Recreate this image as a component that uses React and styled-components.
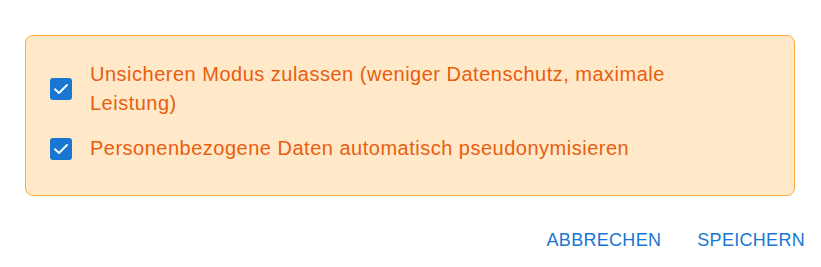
import React, { useState } from "react"
import styled, { createGlobalStyle } from "styled-components"

const GlobalStyle = createGlobalStyle`
    body {
        margin: 0;
        background: #ffffff;
        font-family: "Liberation Sans", Arial, sans-serif;
    }
`

const Page = styled.div`
    display: flex;
    flex-direction: column;
    padding: 35px 26px 0 25px;
`

const WarningBox = styled.div`
    display: flex;
    flex-direction: column;
    gap: 16px;
    height: 161px;
    box-sizing: border-box;
    padding: 24px 24px 0 24px;
    background-color: #ffe9c9;
    border: 1px solid #ffab40;
    border-radius: 8px;
`

const OptionRow = styled.label`
    display: flex;
    align-items: center;
    gap: 18px;
    cursor: pointer;
`

const CheckBox = styled.span`
    flex: 0 0 auto;
    display: flex;
    align-items: center;
    justify-content: center;
    width: 22px;
    height: 22px;
    border-radius: 3px;
    background-color: ${({ checked }) => (checked ? "#1976d2" : "transparent")};
    border: ${({ checked }) => (checked ? "none" : "2px solid #757575")};
    box-sizing: border-box;
`

const OptionText = styled.span`
    max-width: 620px;
    font-size: 20px;
    line-height: 29px;
    color: #ea5d0f;
    letter-spacing: 0.5px;
`

const Actions = styled.div`
    display: flex;
    justify-content: flex-end;
    gap: 36px;
    margin-top: 32px;
    margin-right: -10px;
`

const TextButton = styled.button`
    all: unset;
    cursor: pointer;
    font-family: "Liberation Sans", Arial, sans-serif;
    font-size: 18px;
    line-height: 24px;
    letter-spacing: 0.3px;
    text-transform: uppercase;
    color: #1976d2;
`

const Option = ({ label, checked, onToggle }) => (
    <OptionRow onClick={onToggle}>
        <CheckBox checked={checked}>
            {checked && (
                <svg width="22" height="22" viewBox="0 0 22 22">
                    <path d="M5 11.3 L9 15 L17 7" fill="none" stroke="#fff" strokeWidth="1.9" strokeLinecap="round" strokeLinejoin="round" />
                </svg>
            )}
        </CheckBox>
        <OptionText>{label}</OptionText>
    </OptionRow>
)

const App = () => {
    const [unsafeMode, setUnsafeMode] = useState(true)
    const [pseudonymize, setPseudonymize] = useState(true)

    return (
        <Page>
            <GlobalStyle />
            <WarningBox>
                <Option
                    label="Unsicheren Modus zulassen (weniger Datenschutz, maximale Leistung)"
                    checked={unsafeMode}
                    onToggle={() => setUnsafeMode(v => !v)}
                />
                <Option
                    label="Personenbezogene Daten automatisch pseudonymisieren"
                    checked={pseudonymize}
                    onToggle={() => setPseudonymize(v => !v)}
                />
            </WarningBox>
            <Actions>
                <TextButton>Abbrechen</TextButton>
                <TextButton>Speichern</TextButton>
            </Actions>
        </Page>
    )
}

export default App
